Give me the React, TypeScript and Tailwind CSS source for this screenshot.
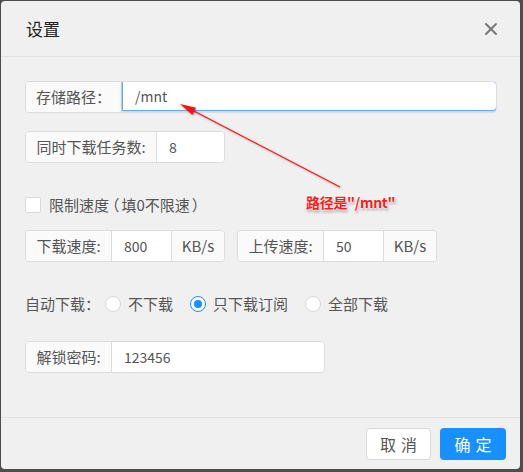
import { X } from "lucide-react";

const font = "font-['Noto_Sans_CJK_SC','Noto_Sans',sans-serif]";

function Addon({ text, w, last }: { text: string; w: string; last?: boolean }) {
  return (
    <div
      className={`${w} h-full flex items-center justify-center bg-[#fafafa] text-[#555] ${
        last ? "" : "border-r border-[#dcdcdc]"
      }`}
    >
      {text}
    </div>
  );
}

function Field({ value, w, border }: { value: string; w: string; border?: boolean }) {
  return (
    <div
      className={`${w} h-full flex items-center px-3 bg-white text-[#555] text-[14px] ${
        border ? "border-r border-[#dcdcdc]" : ""
      }`}
    >
      {value}
    </div>
  );
}

function Radio({ label, checked }: { label: string; checked?: boolean }) {
  return (
    <label className="flex items-center gap-[7px]">
      <span
        className={`w-4 h-4 rounded-full bg-white border flex items-center justify-center ${
          checked ? "border-[#1890ff]" : "border-[#d9d9d9]"
        }`}
      >
        {checked && <span className="w-2 h-2 rounded-full bg-[#1890ff]" />}
      </span>
      <span>{label}</span>
    </label>
  );
}

export default function App() {
  return (
    <div className={`w-[523px] h-[472px] bg-[#4d4d4d] pt-px pl-px ${font}`}>
      <div className="relative w-[519px] h-[468px] bg-[#f0f0f0] rounded-[4px] flex flex-col">
        {/* header */}
        <div className="h-[56px] flex items-center justify-between pl-[25px] pr-[19px] border-b border-[#e2e2e2]">
          <span className="text-[17px] text-[#222]">设置</span>
          <X className="w-5 h-5 text-[#777]" strokeWidth={2.4} />
        </div>

        {/* body */}
        <div className="flex-1 pl-6 text-[15px] text-[#555]">
          <div className="mt-6 flex h-8 w-[472px] rounded-[4px] border border-[#dcdcdc] overflow-hidden">
            <Addon text="存储路径：" w="w-[96px]" />
            <div className="flex-1 h-full flex items-center px-3 bg-white border border-[#64a7ee] rounded-r-[4px] shadow-[0_0_3px_rgba(24,144,255,0.5)] -my-px -mr-px text-[14px]">
              /mnt
            </div>
          </div>

          <div className="mt-[18px] flex h-8 w-[200px] rounded-[4px] border border-[#dcdcdc] overflow-hidden">
            <Addon text="同时下载任务数:" w="w-[131px]" />
            <Field value="8" w="flex-1" />
          </div>

          <div className="mt-[34px] flex items-center gap-2 h-4">
            <span className="w-4 h-4 bg-white border border-[#d9d9d9] rounded-[2px]" />
            <span>
              限制速度<span className="ml-[3px] mr-[2px] [font-feature-settings:'halt']">（</span>填0不限速
              <span className="ml-[2px] [font-feature-settings:'halt']">）</span>
            </span>
          </div>

          <div className="mt-[17px] flex gap-3">
            <div className="flex h-8 w-[200px] rounded-[4px] border border-[#dcdcdc] overflow-hidden">
              <Addon text="下载速度:" w="w-[86px]" />
              <Field value="800" w="w-[60px]" border />
              <Addon text="KB/s" w="flex-1" last />
            </div>
            <div className="flex h-8 w-[200px] rounded-[4px] border border-[#dcdcdc] overflow-hidden">
              <Addon text="上传速度:" w="w-[86px]" />
              <Field value="50" w="w-[60px]" border />
              <Addon text="KB/s" w="flex-1" last />
            </div>
          </div>

          <div className="mt-[34px] flex items-center h-4">
            <span className="mr-[5px]">自动下载：</span>
            <div className="flex items-center gap-[17px]">
              <Radio label="不下载" />
              <Radio label="只下载订阅" checked />
              <Radio label="全部下载" />
            </div>
          </div>

          <div className="mt-[29px] flex h-8 w-[300px] rounded-[4px] border border-[#dcdcdc] overflow-hidden">
            <Addon text="解锁密码:" w="w-[86px]" />
            <Field value="123456" w="flex-1" />
          </div>
        </div>

        {/* footer */}
        <div className="h-[52px] border-t border-[#e2e2e2] flex items-start justify-end gap-[9px] pr-[14px] pt-[10px]">
          <button className="w-[65px] h-8 rounded-[4px] bg-white border border-[#d9d9d9] text-[16px] text-[#555] tracking-[5px] pl-[5px]">
            取消
          </button>
          <button className="w-[66px] h-8 rounded-[4px] bg-[#1890ff] text-[16px] text-white tracking-[5px] pl-[5px]">
            确定
          </button>
        </div>

        {/* annotation */}
        <svg
          className="absolute left-[-1px] top-[-1px] pointer-events-none drop-shadow-[1px_1px_1px_rgba(0,0,0,0.3)]"
          width="523"
          height="472"
        >
          <line x1="192" y1="110" x2="340" y2="187" stroke="#ff1010" strokeWidth="1.2" />
          <polygon points="180,104 196,107.8 192.4,115" fill="#ff1010" />
        </svg>
        <span className="absolute left-[305px] top-[191px] text-[14px] font-bold text-[#ff1a1a] tracking-[-0.3px] [text-shadow:0_0_2px_#fff,0_0_2px_#fff,0_0_3px_#fff,1px_2px_3px_rgba(0,0,0,0.45)]">
          路径是"/mnt"
        </span>
      </div>
    </div>
  );
}
